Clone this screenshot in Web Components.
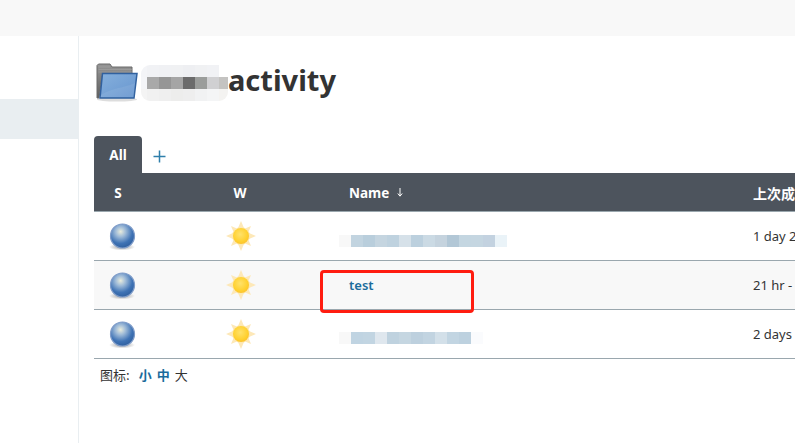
<!DOCTYPE html>
<html><head><meta charset="utf-8">
<style>
html,body{margin:0;padding:0;height:100%;overflow:hidden;background:#fff}
body{font-family:"Noto Sans","Noto Sans CJK SC",sans-serif;color:#333}
</style></head>
<body>
<jk-app>
  <jk-sidebar slot="side"></jk-sidebar>
  <jk-title slot="main">activity</jk-title>
  <jk-tabs slot="main"></jk-tabs>
  <jk-table slot="main">
    <jk-row dy="10" cells="#f8f8f8,#c2d4e0,#b9cedc,#c5d5e0,#bfd2df,#d6e1e9,#bcd0de,#cbdae4,#c5d3de,#b2c7d6,#c4d6e1,#c5d6e1,#c3d2e0,#eaf3f8" last="1 day 2"></jk-row>
    <jk-row alt name="test" last="21 hr -"></jk-row>
    <jk-row dy="7" cells="#f8f8f8,#c0d4e2,#c2d5e2,#dfe7ee,#bfd2df,#c5d6e1,#bdd0de,#c2d4e1,#d3e0e9,#c2d5e2,#bdd1df,#fafbfd" last="2 days"></jk-row>
  </jk-table>
  <jk-legend slot="main"></jk-legend>
</jk-app>
<script>
const def=(name,html,setup)=>customElements.define(name,class extends HTMLElement{
  connectedCallback(){ if(this.shadowRoot)return; const r=this.attachShadow({mode:'open'}); r.innerHTML=typeof html==='function'?html(this):html; setup&&setup(r,this); }
});
def('jk-app',`<style>
:host{display:block;height:443px;position:relative;overflow:hidden}
.top{height:36px;background:#f8f8f8}
.body{display:flex;height:407px}
.side{flex:0 0 78px;border-right:1px solid #e9eef1}
.main{flex:1;min-width:0;padding-left:15px;overflow:hidden}
.mark{position:absolute;left:320px;top:270px;width:148px;height:37px;border:3px solid #ff1c10;border-radius:4px}
</style><div class="top"></div><div class="body"><div class="side"><slot name="side"></slot></div><div class="main"><slot name="main"></slot></div></div><div class="mark"></div>`);
def('jk-sidebar',`<style>:host{display:block;padding-top:63px}.sel{height:40px;background:#e9eef1}</style><div class="sel"></div>`);
def('jk-title',`<style>
:host{display:flex;align-items:center;box-sizing:border-box;height:100px;padding-bottom:12px;position:relative;font:700 29px/36px "Noto Sans",sans-serif;color:#333}
svg{margin:26px 0 0 2px;flex:none;align-self:flex-start}
.t{margin-left:-7px;padding-left:95px}
.blur{position:absolute;left:47px;top:29px;width:87px;height:36px;display:grid;grid-template-columns:6px repeat(7,12px);grid-auto-rows:12px;overflow:hidden;border-radius:9px}
.blur i{display:block}
</style>
<svg width="44" height="40" viewBox="0 0 44 40">
<defs><linearGradient id="g" x1="0" y1="0" x2="0" y2="1"><stop offset="0" stop-color="#969696"/><stop offset="1" stop-color="#5e5e5e"/></linearGradient>
<linearGradient id="b" x1="0" y1="0" x2="1" y2="1"><stop offset="0" stop-color="#86b0dc"/><stop offset="1" stop-color="#6695cf"/></linearGradient></defs>
<ellipse cx="21" cy="37.500" rx="20" ry="2" fill="#ddd"/>
<path d="M1 3.500 2.500 2H14l2 3h20v9H6L3 36H1Z" fill="url(#g)" stroke="#6a6a6a" stroke-width="1"/>
<path d="M2.500 5H14M2.500 7.500H36M2.500 10H36" stroke="#b0b0b0" stroke-width=".7" opacity=".6"/>
<path d="M6.500 11.500H41L38 36H4Z" fill="url(#b)" stroke="#31619f" stroke-width="1.500"/>
<path d="M5 33C15 26 28 26 39 21L38 35H4Z" fill="#fff" opacity=".08"/>
</svg><span class="t"><slot></slot></span>
<div class="blur" id="bl"></div>`,(r)=>{
 const rows=[['#f3f4f7','#f1f2f5','#f0f1f4','#f0f1f3','#eeeff2','#f0f1f3','#f1f2f5','transparent'],['#f4f5f8','#a9a9a9','#969696','#a5a5a5','#6b6b6b','#9b9d9b','#d0d0d2','#c4c3c1'],['#f4f4f4','#f1f1f1','#efefef','#ededec','#eeeeee','#f1f2f3','#f4f5f6','#f4f3f1']];
 r.getElementById('bl').innerHTML=rows.flat().map(c=>`<i style="background:${c}"></i>`).join('');
});
def('jk-tabs',`<style>
:host{display:flex;align-items:center;height:37px}
.tab{width:48px;height:37px;background:#4d545d;color:#fff;border-radius:4px 4px 0 0;font:700 13.500px/38px "Noto Sans",sans-serif;text-align:center}
svg{margin-left:11px;margin-top:3px}
</style><div class="tab">All</div><svg width="13" height="13" viewBox="0 0 13 13"><path d="M6.500 .5v12M.5 6.500h12" stroke="#2f7fab" stroke-width="1.500"/></svg>`);
def('jk-table',`<style>
:host{display:block;width:720px}
.h{display:grid;grid-template-columns:48px 196px 404px 72px;height:38px;padding-top:1px;box-sizing:border-box;align-items:center;background:#4d545d;color:#fff;font:700 13.500px "Noto Sans","Noto Sans CJK SC",sans-serif;white-space:nowrap}
.c{text-align:center}.n{padding-left:11px;display:flex;align-items:center}
.n svg{margin-left:8px}
.cjk{font-size:14px;overflow:hidden}
.line{height:1px;background:#9aa7ae}
</style><div class="h"><div class="c">S</div><div class="c">W</div><div class="n">Name<svg width="6" height="9" viewBox="0 0 6 9"><path d="M3 0V8M.8 5.500 3 8.200 5.200 5.500" fill="none" stroke="#fff" stroke-width="1"/></svg></div><div class="n cjk">上次成</div></div><div class="line"></div><slot></slot>`);
def('jk-ball',`<style>:host{display:block;width:28px;height:30px}</style>
<svg width="28" height="30" viewBox="0 0 28 30"><defs>
<radialGradient id="r" cx=".42" cy=".32" r=".7"><stop offset="0" stop-color="#e9ecdc"/><stop offset=".3" stop-color="#9fbbd8"/><stop offset=".7" stop-color="#3f73b5"/><stop offset="1" stop-color="#2f5f9e"/></radialGradient>
<radialGradient id="s"><stop offset="0" stop-color="#999"/><stop offset="1" stop-color="#999" stop-opacity="0"/></radialGradient></defs>
<ellipse cx="14" cy="26" rx="13" ry="3.500" fill="url(#s)"/>
<circle cx="14.500" cy="15" r="12" fill="url(#r)" stroke="#7f9cc9" stroke-width="1.200"/></svg>`);
def('jk-sun',`<style>:host{display:block;width:30px;height:30px}</style>
<svg width="30" height="30" viewBox="0 0 30 30"><defs>
<radialGradient id="y" cx=".45" cy=".4" r=".65"><stop offset="0" stop-color="#ffe26a"/><stop offset=".7" stop-color="#ffd02f"/><stop offset="1" stop-color="#fbbf2b"/></radialGradient></defs>
<g fill="#fde8b8">
<path d="M15 0 18 7H12Z"/><path d="M15 30 18 23H12Z"/><path d="M0 15 7 12V18Z"/><path d="M30 15 23 12V18Z"/>
<path d="M5 5 11 7.500 7.500 11Z"/><path d="M25 5 19 7.500 22.500 11Z"/><path d="M5 25 11 22.500 7.500 19Z"/><path d="M25 25 19 22.500 22.500 19Z"/></g>
<circle cx="15" cy="15" r="9" fill="#fde8b0"/><circle cx="15" cy="15" r="8" fill="url(#y)"/></svg>`);
def('jk-row',(h)=>{
 const cells=(h.getAttribute('cells')||'').split(',').filter(Boolean);
 const name=h.getAttribute('name');
 return `<style>
:host{display:block}
.r{display:grid;grid-template-columns:48px 196px 404px 72px;height:48px;align-items:center;border-bottom:1px solid #9aa7ae;background:${h.hasAttribute('alt')?'#f8f8f8':'#fff'};font:13px/18px "Noto Sans",sans-serif;color:#333;white-space:nowrap}
.a{padding-left:14px}.b{display:flex;justify-content:center;padding-left:1px}
.n{padding-left:11px;color:#1b6c9c;font-weight:600}
.l{padding-left:11px;overflow:hidden}
.s{display:flex;height:12px;margin-left:-10px;margin-top:${h.getAttribute('dy')||0}px}.s i{width:12px;display:block}
</style><div class="r"><div class="a"><jk-ball></jk-ball></div><div class="b"><jk-sun></jk-sun></div>
<div class="n">${name||`<div class="s">${cells.map(c=>`<i style="background:${c}"></i>`).join('')}</div>`}</div>
<div class="l">${h.getAttribute('last')}</div></div>`;
});
def('jk-legend',`<style>
:host{display:flex;align-items:center;height:30px;padding-left:6px;font:13px "Noto Sans CJK SC","Noto Sans",sans-serif;color:#333;white-space:nowrap}
a{color:#1b6c9c;font-weight:700;margin-left:5px}.f{margin-left:9px}a.n{font-weight:400;color:#333}
</style>图标:<a class="f">小</a><a>中</a><a class="n">大</a>`);
</script>
</body></html>
